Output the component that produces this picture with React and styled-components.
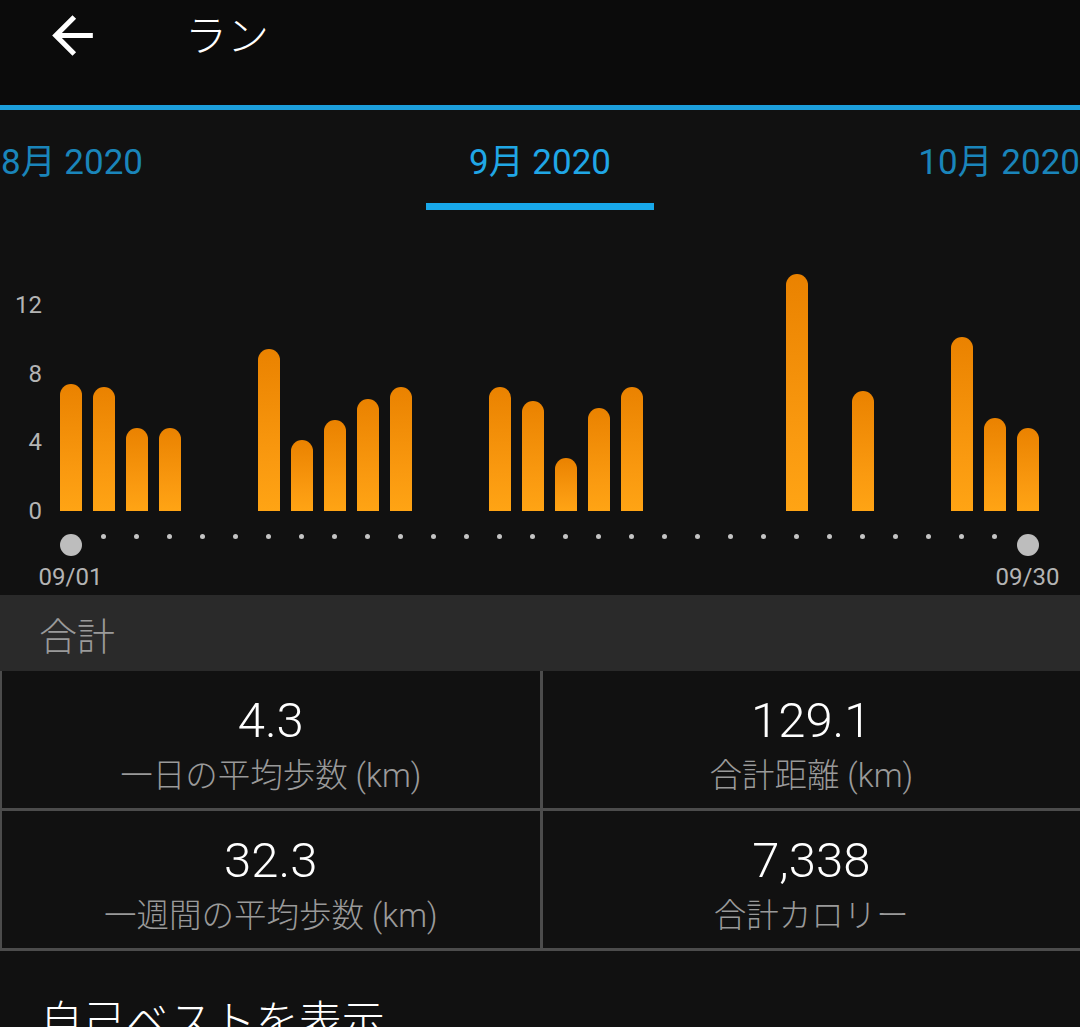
import React from 'react';
import styled, { createGlobalStyle } from 'styled-components';

const GlobalStyle = createGlobalStyle`
  html, body {
    margin: 0;
    padding: 0;
    background: #111111;
  }
  body {
    font-family: Roboto, "Noto Sans CJK JP", sans-serif;
    color: #fff;
  }
  * { box-sizing: border-box; }
`;

// km per day, 09/01 .. 09/30 (0 = no run)
const days = [
  7.4, 7.2, 4.8, 4.8, 0, 0, 9.4, 4.1, 5.3, 6.5,
  7.2, 0, 0, 7.2, 6.4, 3.1, 6.0, 7.2, 0, 0,
  0, 0, 13.8, 0, 7.0, 0, 0, 10.1, 5.4, 4.8,
];
const PX_PER_KM = 17.2;

const stats = [
  { value: '4.3', label: '一日の平均歩数 (km)' },
  { value: '129.1', label: '合計距離 (km)' },
  { value: '32.3', label: '一週間の平均歩数 (km)' },
  { value: '7,338', label: '合計カロリー' },
];

export default function App() {
  return (
    <Page>
      <GlobalStyle />
      <TopBar>
        <Toolbar>
          <BackButton aria-label="back">
            <svg width="61" height="61" viewBox="0 0 24 24">
              <path fill="#fff" d="M20 11H7.83l5.59-5.59L12 4l-8 8 8 8 1.41-1.41L7.83 13H20v-2z" />
            </svg>
          </BackButton>
          <Title>ラン</Title>
        </Toolbar>
      </TopBar>
      <BlueLine />
      <Tabs>
        <Tab $align="start">8月 2020</Tab>
        <Tab $align="center" $active>9月 2020</Tab>
        <Tab $align="end">10月 2020</Tab>
      </Tabs>

      <Chart>
        <Axis>
          <Tick>12</Tick>
          <Tick>8</Tick>
          <Tick>4</Tick>
          <Tick>0</Tick>
        </Axis>
        <Days>
          {days.map((km, i) => {
            const edge = i === 0 || i === days.length - 1;
            return (
              <Day key={i}>
                <BarArea>
                  {km > 0 && <Bar style={{ height: km * PX_PER_KM }} />}
                </BarArea>
                <Dot $big={edge} />
                {edge && <DateLabel>{`09/${String(i + 1).padStart(2, '0')}`}</DateLabel>}
              </Day>
            );
          })}
        </Days>
      </Chart>

      <SectionHeader>合計</SectionHeader>
      <StatGrid>
        {stats.map((s) => (
          <StatCell key={s.label}>
            <StatValue>{s.value}</StatValue>
            <StatLabel>{s.label}</StatLabel>
          </StatCell>
        ))}
      </StatGrid>

      <BestLink>自己ベストを表示</BestLink>
    </Page>
  );
}

const Page = styled.div`
  width: 1080px;
  height: 1027px;
  overflow: hidden;
  background: #111111;
`;

const TopBar = styled.div`
  background: #0b0b0b;
  padding-bottom: 35px;
`;

const Toolbar = styled.div`
  height: 70px;
  display: flex;
  align-items: center;
`;

const BackButton = styled.div`
  width: 61px;
  height: 61px;
  margin-left: 42px;
  display: flex;
  svg { display: block; }
`;

const Title = styled.div`
  margin-left: 82px;
  font-family: "Noto Sans CJK JP", sans-serif;
  font-size: 42px;
  font-weight: 300;
  line-height: 50px;
  color: #fff;
  margin-top: -5px;
`;

const BlueLine = styled.div`
  height: 5px;
  background: #1c9fdc;
`;

const Tabs = styled.div`
  height: 101px;
  display: grid;
  grid-template-columns: 1fr 228px 1fr;
`;

const Tab = styled.div`
  justify-self: ${(p) => p.$align};
  height: 100px;
  width: ${(p) => (p.$active ? '228px' : 'auto')};
  padding: 33px 0 0 ${(p) => (p.$align === 'start' ? '1px' : '0')};
  text-align: center;
  font-size: 35px;
  line-height: 40px;
  white-space: nowrap;
  color: ${(p) => (p.$active ? '#20a7e6' : '#1a85ba')};
  border-bottom: 7px solid ${(p) => (p.$active ? '#18a8ea' : 'transparent')};
`;

const Chart = styled.div`
  height: 384px;
  display: flex;
`;

const Axis = styled.div`
  width: 54px;
  height: 228px;
  margin-top: 83px;
  padding-right: 12px;
  display: flex;
  flex-direction: column;
  justify-content: space-between;
  align-items: flex-end;
`;

const Tick = styled.div`
  font-size: 24px;
  line-height: 22px;
  color: #b4b4b4;
`;

const Days = styled.div`
  display: flex;
`;

const Day = styled.div`
  width: 33px;
  display: flex;
  flex-direction: column;
  align-items: center;
`;

const BarArea = styled.div`
  height: 300px;
  width: 100%;
  display: flex;
  align-items: flex-end;
  justify-content: center;
`;

const Bar = styled.div`
  width: 22px;
  border-radius: 11px 11px 0 0;
  background: linear-gradient(180deg, #ea8200 0%, #fa9a10 70%, #ffa414 100%);
`;

const Dot = styled.div`
  margin-top: 23px;
  width: ${(p) => (p.$big ? '22px' : '5px')};
  height: ${(p) => (p.$big ? '22px' : '5px')};
  border-radius: 50%;
  background: ${(p) => (p.$big ? '#bdbdbd' : '#c4c4c4')};
`;

const DateLabel = styled.div`
  margin-top: 8px;
  font-size: 24px;
  line-height: 26px;
  white-space: nowrap;
  color: #b4b4b4;
`;

const SectionHeader = styled.div`
  height: 76px;
  background: #2a2a2a;
  padding-left: 39px;
  display: flex;
  align-items: center;
  font-family: "Noto Sans CJK JP", sans-serif;
  font-weight: 300;
  font-size: 38px;
  color: #9a9a9a;
`;

const StatGrid = styled.div`
  display: grid;
  grid-template-columns: 1fr 1fr;
  gap: 3px;
  padding: 0 0 3px 2px;
  background: #4c4c4c;
`;

const StatCell = styled.div`
  height: 137px;
  background: #111111;
  padding-top: 22px;
  display: flex;
  flex-direction: column;
  align-items: center;
`;

const StatValue = styled.div`
  font-size: 49px;
  font-weight: 300;
  line-height: 56px;
  color: #fff;
`;

const StatLabel = styled.div`
  margin-top: 6px;
  font-size: 32.5px;
  font-weight: 300;
  line-height: 42px;
  color: #9a9a9a;
  white-space: nowrap;
`;

const BestLink = styled.div`
  margin-top: 41px;
  padding-left: 40px;
  font-family: "Noto Sans CJK JP", sans-serif;
  font-size: 43px;
  font-weight: 300;
  line-height: 52px;
  color: #fff;
`;
